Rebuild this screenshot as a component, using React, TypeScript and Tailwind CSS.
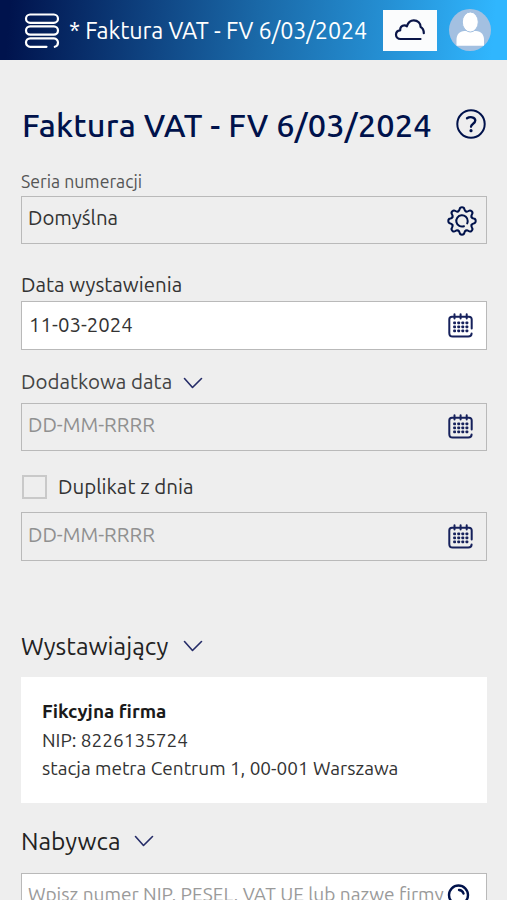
import { ReactNode } from "react"

export default function App() {
  return (
    <div className="h-[900px] w-full overflow-hidden bg-[#eeeeee] text-[#333] font-['Ubuntu','Noto_Sans',sans-serif]">
      <header className="flex h-[60px] items-center bg-[linear-gradient(95deg,#00134d_2%,#0f4482_30%,#1a69a8_51%,#2590d4_76%,#30b6fe_97%)] pl-6 pr-4">
        <MenuIcon />
        <span className="ml-[9px] w-[304px] whitespace-nowrap text-[23.4px] leading-[60px] tracking-[-0.1px] text-white">
          * Faktura VAT - FV 6/03/2024
        </span>
        <button className="ml-[10px] flex h-[41px] w-[54px] items-center justify-center bg-[#fbfcfd]">
          <CloudIcon />
        </button>
        <AvatarIcon />
      </header>

      <main className="pl-[21px] pr-5">
        <div className="flex h-[122px] items-center justify-between pr-px pt-[9px]">
          <h1 className="ml-px whitespace-nowrap text-[32.5px] font-medium tracking-[0.2px] text-[#00124b]">
            Faktura VAT - FV 6/03/2024
          </h1>
          <HelpIcon />
        </div>
        <div className="-mt-3 mb-px flex h-[25px] items-center text-[17.7px] text-[#555]">
          <span>Seria numeracji</span>
        </div>

        <Field className="h-12">
          <span className="pb-[3px]">Domyślna</span>
          <GearIcon />
        </Field>

        <div className="mt-[26px] flex h-[31px] items-center text-[20.5px]">
          <span>Data wystawienia</span>
        </div>
        <Field className="h-[49px] bg-white">
          <span className="ml-px">11-03-2024</span>
          <CalendarIcon />
        </Field>

        <div className="mb-[3px] mt-[15px] flex h-[35px] items-center text-[20.5px] text-[#444]">
          <span className="w-[162px]">Dodatkowa data</span>
          <Chevron />
        </div>
        <Field className="h-12 text-[#909090]">
          <span className="pb-[3px]">DD-MM-RRRR</span>
          <CalendarIcon />
        </Field>

        <label className="mb-1 mt-[17px] flex h-10 items-center text-[20.5px]">
          <span className="mb-[3px] ml-px mr-[11px] h-6 w-[25px] border-2 border-[#c9c9c9]" />
          <span className="pb-[2px]">Duplikat z dnia</span>
        </label>
        <Field className="h-[49px] text-[#909090]">
          <span className="pb-[3px]">DD-MM-RRRR</span>
          <CalendarIcon />
        </Field>

        <h2 className="mt-[65px] flex h-10 items-center text-[24.6px] text-[#222]">
          <span className="w-[162px]">Wystawiający</span>
          <Chevron />
        </h2>
        <section className="mt-[11px] h-[126px] bg-white pl-[21px] pt-5 text-[19px] leading-[28.7px]">
          <p className="font-bold text-[#1a1a1a]">Fikcyjna firma</p>
          <p>NIP: 8226135724</p>
          <p>stacja metra Centrum 1, 00-001 Warszawa</p>
        </section>

        <h2 className="mt-[18px] flex h-10 items-center text-[24.5px] text-[#222]">
          <span className="w-[113px]">Nabywca</span>
          <Chevron />
        </h2>
        <Field className="mt-3 h-[49px] bg-white text-[#9a9a9a]">
          <span className="whitespace-nowrap pb-[6px] text-[19.1px]">Wpisz numer NIP, PESEL, VAT UE lub nazwę firmy</span>
          <SearchIcon />
        </Field>
      </main>
    </div>
  )
}

function Field({ className, children }: { className: string; children: ReactNode }) {
  return (
    <div className={`flex items-center justify-between border border-[#b9b9b9] pl-[6px] pr-[11px] text-[20.4px] ${className}`}>
      {children}
    </div>
  )
}

function MenuIcon() {
  return (
    <svg viewBox="0 0 36 36" fill="none" stroke="white" strokeWidth="2.2" strokeLinecap="round" className="mt-[2px] h-9 w-9 shrink-0">
      <rect x="2" y="1.500" width="32" height="8.300" rx="4.150" />
      <rect x="2" y="13.400" width="32" height="8.300" rx="4.150" />
      <path d="M22.500 33.800H6.200a4.200 4.200 0 0 1 0-8.400H30a4.100 4.100 0 0 1 4 4.200c0 2-1 3.600-3.200 4.200" />
    </svg>
  )
}

function CloudIcon() {
  return (
    <svg viewBox="0 0 32 24" fill="none" stroke="#0a1548" strokeWidth="2.2" strokeLinecap="round" strokeLinejoin="round" className="h-6 w-8">
      <path d="M26.500 21H6.500C3.800 21 2 19.200 2 16.800c0-2.600 1.800-4.200 4.200-4.400-.3-3 1.500-5 4.200-5 1 0 1.800.3 2.400 1C14 4.500 16.500 2.300 19.800 2.300c4 0 6.900 3 6.800 6.700 2 1 3.200 3.200 3.200 6.200" />
    </svg>
  )
}

function AvatarIcon() {
  return (
    <svg viewBox="0 0 42 42" className="ml-3 h-[42px] w-[42px] shrink-0">
      <circle cx="21" cy="21" r="21" fill="#a3c0e1" />
      <path d="M7.500 36.800V31c0-5.500 3-9 8-9h11.500c5 0 8 3.500 8 9v5.800H7.500Z" fill="white" />
      <ellipse cx="21.300" cy="13" rx="8" ry="10" fill="white" stroke="#a3c0e1" strokeWidth="1" />
    </svg>
  )
}

function HelpIcon() {
  return (
    <svg viewBox="0 0 30 30" fill="none" stroke="#00124b" strokeWidth="2" strokeLinecap="round" className="-mt-[3px] h-[30px] w-[30px] shrink-0">
      <circle cx="15" cy="15" r="13.700" />
      <path d="M11 9.300c2.500-1.800 8.300-1.700 8.300 2.200 0 3.200-4.300 3.200-4.300 6.300" strokeWidth="2.300" />
      <circle cx="15" cy="21.700" r="1.600" fill="#00124b" stroke="none" />
    </svg>
  )
}

function GearIcon() {
  return (
    <svg viewBox="0 0 30 30" fill="none" stroke="#00124b" strokeWidth="2" strokeLinecap="round" strokeLinejoin="round" className="mr-[-2px] mt-[2px] h-[30px] w-[30px] shrink-0">
      {[0, 45, 90, 135, 180, 225, 270, 315].map((angle) => (
        <path
          key={angle}
          transform={`rotate(${angle} 15 15)`}
          d="M11.050 5.450C12.100 5.050 12.400 4.400 12.600 3.300 12.800 1.800 13.400 1.300 15 1.300s2.200.5 2.400 2c.2 1.100.5 1.750 1.550 2.150"
        />
      ))}
      <path d="M17 20.200a5.700 5.700 0 1 1 3.700-5.200c0 1-.2 1.800-.5 2.400" />
    </svg>
  )
}

function CalendarIcon() {
  return (
    <svg viewBox="0 0 25 25" fill="none" stroke="#16215c" strokeWidth="2" strokeLinecap="round" className="mb-px mr-[2px] h-[25px] w-[25px] shrink-0">
      <path d="M23.700 15.500V6.500c0-1.800-.9-2.700-2.700-2.700H4c-1.800 0-2.700.9-2.700 2.700V20c0 2.500 1 3.600 3.400 3.600h15.500c2.300 0 3.400-1 3.400-3" />
      <path d="M6.500 1.300v4.200M12.600 1.300v4.200M18.700 1.300v4.200" />
      {[9.8, 13.8, 17.8].map((y) =>
        [6.6, 10.7, 14.8, 18.9].map((x) => (
          <rect key={`${x}-${y}`} x={x - 1.4} y={y - 1.4} width="2.800" height="2.800" rx="0.800" fill="#16215c" stroke="none" />
        ))
      )}
    </svg>
  )
}

function Chevron() {
  return (
    <svg viewBox="0 0 20 12" fill="none" stroke="#252c68" strokeWidth="1.600" strokeLinecap="round" strokeLinejoin="round" className="h-3 w-5">
      <path d="M1.500 1.500 9.500 10.500 18.500 1.500" />
    </svg>
  )
}

function SearchIcon() {
  return (
    <svg viewBox="0 0 28 28" fill="none" stroke="#00124b" strokeWidth="2.400" strokeLinecap="round" className="mt-px h-7 w-7 shrink-0">
      <circle cx="11.500" cy="11" r="9.500" />
      <path d="M12 6a5 5 0 0 1 4.500 3.500M18.500 18l7 8" />
    </svg>
  )
}
